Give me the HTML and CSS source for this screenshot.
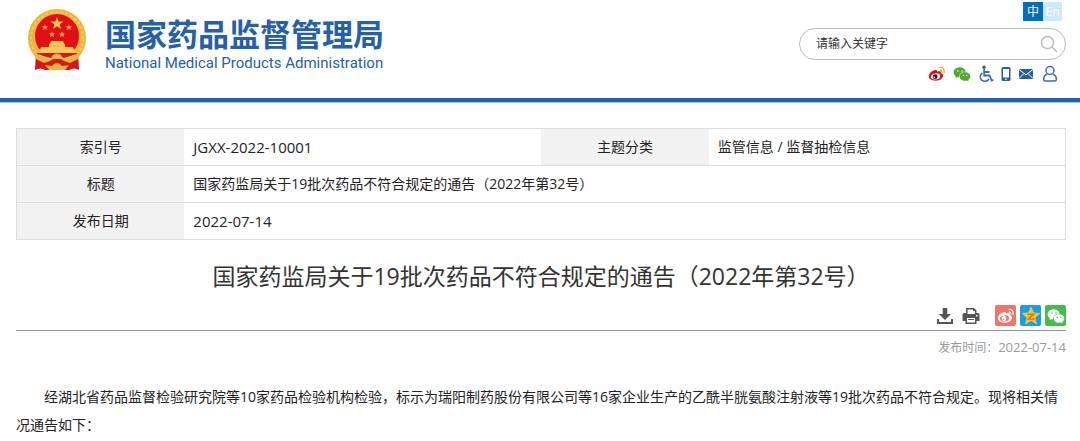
FILE: index.html
```html
<!DOCTYPE html>
<html lang="zh-CN">
<head>
<meta charset="utf-8">
<title>国家药品监督管理局</title>
<link rel="stylesheet" href="styles.css">
</head>
<body>
<svg class="defs" aria-hidden="true">
  <symbol id="weibo" viewBox="0 0 20 18">
    <path class="wb-body" d="M8.200 4.400C5 4.700.8 8 .8 11.500c0 3 3.600 5 7.800 5 5 0 8.200-2.800 8.200-5.400 0-1.700-1.300-2.500-2.600-2.900.8-2.300-1.200-2.800-4-1.800.4-1.500-.5-2.100-2-2z"/>
    <ellipse class="wb-eye" cx="8.400" cy="11.700" rx="5.200" ry="3.400" transform="rotate(-8 8.400 11.700)"/>
    <circle class="wb-iris" cx="7.900" cy="12" r="2.700"/>
    <circle class="wb-eye" cx="7" cy="12.600" r=".9"/>
    <path class="wb-wave" d="M12.800 1.800c3.800-.9 6.300 2.200 5.200 6M13.300 4.700c1.600-.3 2.500.8 2.100 2.300"/>
  </symbol>
  <symbol id="wechat" viewBox="0 0 20 18">
    <path d="M7.600 1.500C3.500 1.500.6 4 .6 7.200c0 1.800 1 3.300 2.500 4.300l-.7 2.200 2.500-1.300c.8.2 1.500.3 2.200.3-.8-3.700 2.500-6.500 7-6.300C13.500 3.500 11 1.500 7.600 1.500z"/>
    <path d="M13.400 7.100c-3.400 0-6 2.100-6 4.800s2.600 4.800 6 4.800c.7 0 1.400-.1 2-.3l2 1.100-.5-1.800c1.500-.9 2.500-2.200 2.500-3.800 0-2.700-2.600-4.800-6-4.800z"/>
    <g class="wc-eyes"><circle cx="5.300" cy="5.600" r=".9"/><circle cx="10" cy="5.600" r=".9"/><circle cx="11.500" cy="10.600" r=".8"/><circle cx="15.400" cy="10.600" r=".8"/></g>
  </symbol>
</svg>

<header class="site-header">
  <a class="brand" href="#">
    <svg class="emblem" viewBox="0 0 58 62" aria-hidden="true">
      <path fill="#c8151b" d="M8 44 7 61q5-3 10 0h24q5-3 10 0l-1-17z"/>
      <circle cx="29" cy="29" r="29" fill="#e9b63f"/>
      <circle cx="29" cy="29" r="26" fill="none" stroke="#f3cb5c" stroke-width="2" stroke-dasharray="3 2"/>
      <circle cx="29" cy="27" r="22" fill="#e20f19"/>
      <path fill="#f3c950" d="m29 8 1.600 4.500h4.800l-3.800 2.900 1.400 4.600-4-2.800-4 2.800 1.400-4.600-3.800-2.900h4.800z"/>
      <g fill="#eebb44">
        <path id="small-star" d="m17 15.500.8 2.100h2.200l-1.700 1.300.6 2.200-1.900-1.300-1.900 1.300.6-2.200-1.700-1.300h2.200z"/>
        <use href="#small-star" x="24"/><use href="#small-star" x="7" y="7"/><use href="#small-star" x="17" y="7"/>
      </g>
      <path fill="#f5cc59" d="M23 32h12l1 3h1v3h8l2 6H11l2-6h8v-3h1z"/>
      <path stroke="#dba039" stroke-width=".7" d="M21 37h16"/>
      <path fill="#d9151c" d="M9 44h40l1 16q-5-3-9 1H17q-4-4-9-1z"/>
      <path fill="#e9b53c" d="M5 42q6 5 14 6l4 1 2-3q4-3 8 0l2 3 4-1q8-1 14-6l-3 8-8 4-6-2-3-2h-8l-3 2-6 2-8-4zM17 56l7 1q2-3 5-3t5 3l7-1-4 5H21z"/>
      <path stroke="#f8d876" fill="none" d="M11 46l11 4 7-3 7 3 11-4"/>
    </svg>
    <span class="brand-text">
      <span class="brand-cn">国家药品监督管理局</span>
      <span class="brand-en">National Medical Products Administration</span>
    </span>
  </a>
  <div class="tools">
    <nav class="lang" aria-label="语言">
      <a class="lang-item current" href="#">中</a><a class="lang-item" href="#">En</a>
    </nav>
    <form class="search">
      <input class="search-input" type="text" aria-label="搜索" placeholder="请输入关键字">
      <button class="search-btn" type="button" aria-label="搜索">
        <svg viewBox="0 0 18 18"><circle cx="7.500" cy="7.500" r="6"/><path d="m12 12 5 5"/></svg>
      </button>
    </form>
    <nav class="quick" aria-label="快捷入口">
      <a href="#" aria-label="微博"><svg class="weibo-color" width="18" height="16"><use href="#weibo"/></svg></a>
      <a href="#" aria-label="微信"><svg class="wechat-color" width="18" height="16"><use href="#wechat"/></svg></a>
      <a href="#" aria-label="无障碍"><svg class="line" width="16" height="18" viewBox="0 0 16 18"><circle cx="6" cy="2.200" r="1.700" class="solid"/><path stroke-width="1.800" d="M6.200 4v6.500h5.300l2.200 5 1.800-.8M6.500 7h5"/><path stroke-width="1.500" d="M4.500 7.800a4.600 4.600 0 1 0 6.500 6"/></svg></a>
      <a href="#" aria-label="手机"><svg class="line" width="10" height="16" viewBox="0 0 10 16"><path fill-rule="evenodd" class="solid" d="M2 1h6q1.500 0 1.500 1.500v11Q9.500 15 8 15H2Q.5 15 .5 13.500v-11Q.5 1 2 1zm0 2v8.500h6V3zm2.300 9.500v1.400h1.400v-1.400z"/></svg></a>
      <a href="#" aria-label="邮箱"><svg width="16" height="12" viewBox="0 0 16 12"><path fill="#245fab" d="M1 1h14v10H1z"/><path fill="none" stroke="#fff" d="m1 1.500 7 5.300 7-5.300M1 10.500l4.800-4.800M15 10.500l-4.800-4.800"/></svg></a>
      <a class="user" href="#" aria-label="用户"><svg class="line" width="16" height="18" viewBox="0 0 16 18"><circle cx="8" cy="5.500" r="4"/><path d="M5.300 9.300C2.800 10 1.700 12 1.600 14.200q0 1.800 1.500 1.800h9.800q1.500 0 1.500-1.800c-.1-2.200-1.200-4.200-3.700-4.900"/></svg></a>
    </nav>
  </div>
</header>

<main class="content">
  <table class="meta">
    <tr><th scope="row">索引号</th><td class="latin">JGXX-2022-10001</td><th scope="row">主题分类</th><td>监管信息 / 监督抽检信息</td></tr>
    <tr><th scope="row">标题</th><td colspan="3">国家药监局关于19批次药品不符合规定的通告（2022年第32号）</td></tr>
    <tr><th scope="row">发布日期</th><td colspan="3" class="latin">2022-07-14</td></tr>
  </table>
  <h1 class="title">国家药监局关于19批次药品不符合规定的通告（2022年第32号）</h1>
  <div class="actions">
    <button class="action" type="button" aria-label="下载"><svg width="16" height="18" viewBox="0 0 16 18"><path d="M5.700 1h4.600v6H14l-6 6-6-6h3.700zM0 12h2v3h12v-3h2v5H0z"/></svg></button>
    <button class="action" type="button" aria-label="打印"><svg width="18" height="18" viewBox="0 0 18 18"><path fill-rule="evenodd" d="M4 1h8l2.500 2.500V6H16q1.500 0 1.500 1.500V14h-3v3h-11v-3h-3V7.500Q.5 6 2 6h2zm1.500 1.500V7H13V4h-2V2.500zM5 11v4.500h8V11zm9-3v1.500h1.500V8zm-8 4h6v1H6z"/></svg></button>
    <div class="shares">
      <a class="share share-weibo" href="#" aria-label="分享到微博"><svg width="18" height="16"><use href="#weibo"/></svg></a>
      <a class="share share-qzone" href="#" aria-label="分享到QQ空间"><svg width="20" height="20" viewBox="0 0 20 20"><path fill="#ffc51c" stroke="#ffda4b" stroke-width=".6" d="m10 1 2.500 5.900 6.400.5-4.900 4.200 1.500 6.300-5.500-3.400-5.500 3.400L6 11.600 1.100 7.400l6.400-.5z"/><path fill="none" stroke="#e7701e" stroke-width="1.500" d="M6.500 8.300h6.300l-5.500 4.800h6.500"/></svg></a>
      <a class="share share-wechat" href="#" aria-label="分享到微信"><svg width="18" height="16"><use href="#wechat"/></svg></a>
    </div>
  </div>
  <p class="published">发布时间：<time class="published-date" datetime="2022-07-14">2022-07-14</time></p>
  <p class="body-text">经湖北省药品监督检验研究院等10家药品检验机构检验，标示为瑞阳制药股份有限公司等16家企业生产的乙酰半胱氨酸注射液等19批次药品不符合规定。现将相关情况通告如下：</p>
</main>
</body>
</html>
```
FILE: styles.css
```css
* { box-sizing: border-box; }
body {
  margin: 0;
  background: #fff;
  color: #222;
  font: 14px/28px "Open Sans", "Noto Sans CJK SC", sans-serif;
}
a { color: inherit; text-decoration: none; }
svg { display: block; }
button { padding: 0; border: 0; background: none; color: inherit; }
.defs { position: absolute; width: 0; height: 0; }

.site-header {
  display: flex;
  justify-content: space-between;
  align-items: flex-start;
  min-height: 102px;
  padding: 2px 14px 0 28px;
  border-bottom: 4px solid #2560ab;
  box-shadow: 0 1px #a9c1e0;
}
.brand { display: flex; gap: 19px; padding-top: 7px; color: #2560ab; }
.emblem { width: 58px; height: 62px; }
.brand-text { display: flex; flex-direction: column; padding-top: 5px; white-space: nowrap; }
.brand-cn { font: bold 31px/38px "Noto Sans CJK SC", sans-serif; }
.brand-en { font: 15px/22px Roboto, sans-serif; }

.tools { display: flex; flex-direction: column; align-items: flex-end; }
.lang { display: flex; margin-right: 4px; }
.lang-item {
  width: 19px;
  background: #cbeaff;
  color: #fff;
  font-size: 12px;
  line-height: 19px;
  text-align: center;
}
.lang-item.current { width: 20px; background: #0070ba; }
.search {
  display: flex;
  align-items: center;
  width: 267px;
  height: 32px;
  margin-top: 7px;
  padding: 0 7px 0 16px;
  border: 1px solid #bbb;
  border-radius: 16px;
}
.search-input {
  flex: 1;
  min-width: 0;
  padding: 0;
  border: 0;
  outline: 0;
  background: none;
  font: 12px/20px "Open Sans", "Noto Sans CJK SC", sans-serif;
}
.search-input::placeholder { color: #333; opacity: 1; }
.search-btn svg { width: 18px; height: 18px; fill: none; stroke: #bbb; stroke-width: 1.5; }
.quick { display: flex; align-items: center; gap: 7px; margin: 5px 9px 0 0; }
.user { margin-left: 1px; }
.quick { margin-right: 8px; }
.line { fill: none; stroke: #3c6db0; stroke-width: 1.5; }
.line .solid { fill: #245fab; stroke: none; }

.wb-body { fill: var(--body, #fff); }
.wb-eye { fill: var(--eye, #f27469); }
.wb-iris { fill: var(--iris, #fff); }
.wb-wave { fill: none; stroke: var(--wave, #fff); stroke-width: 1.5; }
.wc-eyes { fill: var(--dots, #fff); }
.weibo-color { --body: #e50b16; --eye: #fff; --iris: #222; --wave: #f5a623; }
.wechat-color { fill: #50a82d; }

.content { padding: 26px 14px 0 16px; }
.meta { width: 100%; border: 1px solid #ddd; border-collapse: collapse; table-layout: fixed; }
.meta tr { border-bottom: 1px solid #ddd; }
.meta th, .meta td { height: 37px; padding: 0 9px; line-height: 20px; }
.meta th { width: 16%; background: #f2f2f2; font-weight: normal; text-align: center; }
.meta td { text-align: left; }
.meta .latin { font-size: 15px; }

.title {
  margin: 18px 0 0;
  color: #333;
  font-size: 23px;
  font-weight: normal;
  line-height: 36px;
  text-align: center;
}
.actions {
  display: flex;
  justify-content: flex-end;
  align-items: center;
  gap: 9px;
  margin-top: 11px;
  padding-bottom: 4px;
  border-bottom: 1px solid #999;
  color: #555;
}
.action svg { fill: currentColor; }
.shares { display: flex; gap: 4px; margin-left: 6px; }
.share { display: grid; place-items: center; width: 21px; height: 21px; border-radius: 2px; }
.share-weibo { background: #f27469; }
.share-qzone { background: #199ee8; }
.share-wechat { --dots: #43bd4b; background: #43bd4b; fill: #fff; }
.published { margin: 6px 0 0; color: #999; font-size: 12px; line-height: 20px; text-align: right; }
.published-date { font-size: 13px; }
.body-text { margin: 25px 0 0; text-indent: 28px; }
```
